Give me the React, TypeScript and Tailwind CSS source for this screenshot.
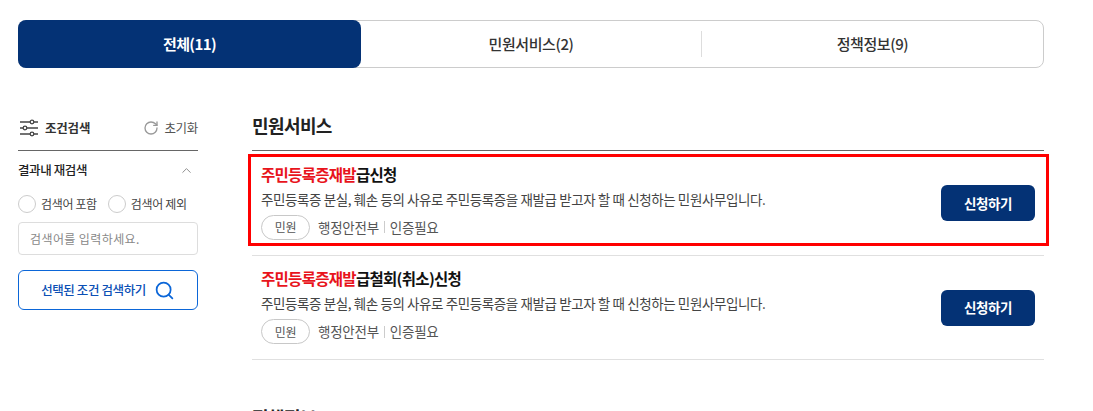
import { ChevronUp, RotateCw, Search } from "lucide-react";

const fontStack = "font-['Noto_Sans_CJK_KR','Noto_Sans',sans-serif]";

function FilterIcon() {
  return (
    <svg viewBox="0 0 18 18" className="h-[18px] w-[18px] text-[#444]" fill="none" stroke="currentColor" strokeWidth="1.3">
      <path d="M0 3h10M14 3h4M0 9h3M7 9h11M0 15h10M14 15h4" />
      <circle cx="12" cy="3" r="1.8" />
      <circle cx="5" cy="9" r="1.8" />
      <circle cx="12" cy="15" r="1.8" />
    </svg>
  );
}

function ServiceRow({ suffix, highlighted }: { suffix: string; highlighted?: boolean }) {
  return (
    <div
      className={`relative flex items-center justify-between border-b border-[#e0e0e0] pl-[9px] pr-[9px] ${
        highlighted ? "h-[105px]" : "h-[104px]"
      }`}
    >
      <div className="flex flex-col pb-[5px]">
        <h3 className="h-[24px] text-[15.5px] leading-[24px] font-bold tracking-[-0.7px] text-[#111]">
          <span className="text-[#e8141c]">주민등록증재발</span>
          {suffix}
        </h3>
        <p className="mt-[1px] text-[13.5px] leading-[24px] tracking-[-0.4px] text-[#444]">
          주민등록증 분실, 훼손 등의 사유로 주민등록증을 재발급 받고자 할 때 신청하는 민원사무입니다.
        </p>
        <div className="mt-[4px] flex items-center text-[13.5px] tracking-[-0.25px] text-[#555]">
          <span className="flex h-[25px] w-[49px] items-center justify-center rounded-full border border-[#c8c8c8] text-[12px]">
            민원
          </span>
          <span className="ml-[8px]">행정안전부</span>
          <span className="mx-[5px] h-[12px] w-px bg-[#ccc]" />
          <span>인증필요</span>
        </div>
      </div>
      <button className="h-[36px] w-[94px] rounded-[6px] bg-[#043275] text-[13.5px] font-bold tracking-[-0.4px] text-white">
        신청하기
      </button>
      {highlighted && (
        <div className="pointer-events-none absolute top-[3px] right-[-5px] bottom-[9px] left-[-4px] border-[3px] border-[#f00]" />
      )}
    </div>
  );
}

export default function App() {
  return (
    <div className={`h-screen overflow-hidden bg-white ${fontStack}`}>
      <div className="ml-[18px] w-[1026px] pt-[20px]">
        {/* Tabs */}
        <div className="flex h-[48px] items-center rounded-[8px] border border-[#ccc] text-[15px] tracking-[-0.4px] text-[#333]">
          <div className="-my-px -ml-px flex h-[48px] w-[343px] items-center justify-center rounded-[8px] bg-[#043275] font-bold tracking-[-0.6px] text-white">
            전체(11)
          </div>
          <div className="flex h-[26px] w-[341px] items-center justify-center border-r border-[#ddd] font-medium">
            민원서비스(2)
          </div>
          <div className="flex flex-1 items-center justify-center font-medium">정책정보(9)</div>
        </div>

        <div className="mt-[38px] flex gap-[54px]">
          {/* Sidebar */}
          <aside className="w-[180px] shrink-0">
            <div className="flex h-[45px] items-center justify-between border-b border-[#666]">
              <div className="flex items-center gap-[7px] pl-[2px]">
                <FilterIcon />
                <span className="text-[12.5px] font-bold tracking-[-0.2px] text-[#333]">조건검색</span>
              </div>
              <div className="flex items-center gap-[5px] text-[12.5px] tracking-[-0.3px] text-[#555]">
                <RotateCw className="h-[16px] w-[16px] text-[#999]" strokeWidth={2} />
                초기화
              </div>
            </div>
            <div className="mt-[8px] flex h-[22px] items-center justify-between">
              <span className="text-[12.5px] font-medium tracking-[-0.4px] text-[#222]">결과내 재검색</span>
              <ChevronUp className="mr-[4px] h-[15px] w-[15px] text-[#888]" strokeWidth={1.5} />
            </div>
            <div className="mt-[14px] flex items-center text-[12px] tracking-[-0.35px] text-[#444]">
              <span className="h-[18px] w-[18px] rounded-full border border-[#ccc]" />
              <span className="ml-[5px]">검색어 포함</span>
              <span className="ml-[11px] h-[18px] w-[18px] rounded-full border border-[#ccc]" />
              <span className="ml-[5px]">검색어 제외</span>
            </div>
            <div className="mt-[9px] flex h-[33px] items-center rounded-[4px] border border-[#ddd] pl-[11px] text-[12px] tracking-[0.4px] text-[#888]">
              검색어를 입력하세요.
            </div>
            <button className="mt-[15px] flex h-[40px] w-full items-center justify-center gap-[8px] rounded-[6px] border border-[#0b66d8] text-[12.5px] font-medium tracking-[-0.4px] text-[#0b4fb5]">
              선택된 조건 검색하기
              <Search className="h-[21px] w-[21px] text-[#0b66d8]" strokeWidth={2} />
            </button>
          </aside>

          {/* Results */}
          <main className="flex-1">
            <h2 className="flex h-[44px] items-start text-[18px] leading-[38px] font-bold tracking-[-0.6px] text-[#222]">
              민원서비스
            </h2>
            <div className="border-t border-[#666]">
              <ServiceRow suffix="급신청" highlighted />
              <ServiceRow suffix="급철회(취소)신청" />
            </div>
            <h2 className="mt-[38px] text-[18px] leading-[38px] font-bold tracking-[-0.6px] text-[#222]">
              정책정보
            </h2>
          </main>
        </div>
      </div>
    </div>
  );
}
